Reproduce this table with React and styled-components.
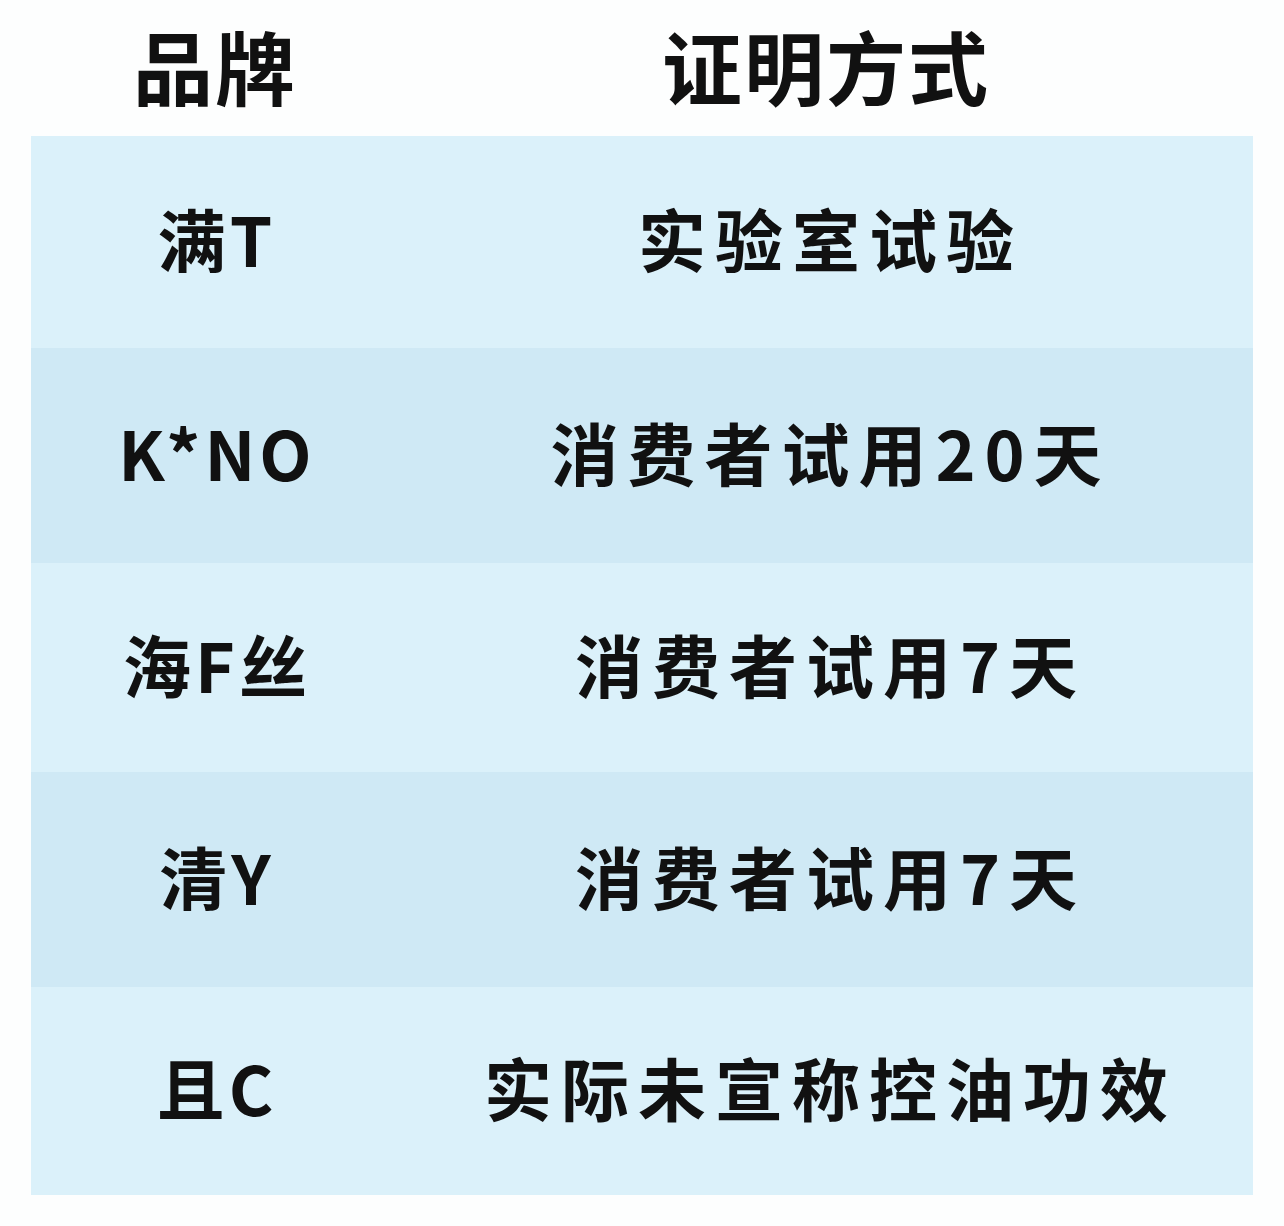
import React from 'react';
import styled, { createGlobalStyle } from 'styled-components';

const GlobalStyle = createGlobalStyle`
  html, body {
    margin: 0;
    padding: 0;
    background: #fdfefe;
  }
  body {
    font-family: 'Noto Sans CJK SC', 'Noto Sans', sans-serif;
    color: #111;
  }
`;

const Page = styled.div`
  width: 1284px;
  height: 1226px;
  padding: 0 31px;
  box-sizing: border-box;
`;

const Grid = styled.div`
  display: grid;
  grid-template-columns: 368px 1fr;
`;

const HeadCell = styled.div`
  height: 136px;
  display: flex;
  align-items: center;
  justify-content: center;
  font-size: 80px;
  font-weight: 700;
  letter-spacing: 2px;
  padding-bottom: 8px;
  box-sizing: border-box;
`;

const Cell = styled.div`
  height: ${(p) => p.$h}px;
  display: flex;
  align-items: center;
  justify-content: center;
  background: ${(p) => (p.$dark ? '#cfe9f5' : '#dbf1fa')};
  font-size: 68px;
  font-weight: 700;
  letter-spacing: ${(p) => (p.$wide ? '9px' : '4px')};
  padding-left: ${(p) => (p.$wide ? '9px' : '4px')};
  padding-bottom: 9px;
  box-sizing: border-box;
`;

const rows = [
  { brand: '满T', proof: '实验室试验', h: 212 },
  { brand: 'K*NO', proof: '消费者试用20天', h: 215 },
  { brand: '海F丝', proof: '消费者试用7天', h: 209 },
  { brand: '清Y', proof: '消费者试用7天', h: 215 },
  { brand: '且C', proof: '实际未宣称控油功效', h: 208 },
];

export default function App() {
  return (
    <Page>
      <GlobalStyle />
      <Grid>
        <HeadCell>品牌</HeadCell>
        <HeadCell>证明方式</HeadCell>
        {rows.map((r, i) => (
          <React.Fragment key={i}>
            <Cell $h={r.h} $dark={i % 2 === 1}>{r.brand}</Cell>
            <Cell $h={r.h} $dark={i % 2 === 1} $wide>{r.proof}</Cell>
          </React.Fragment>
        ))}
      </Grid>
    </Page>
  );
}
